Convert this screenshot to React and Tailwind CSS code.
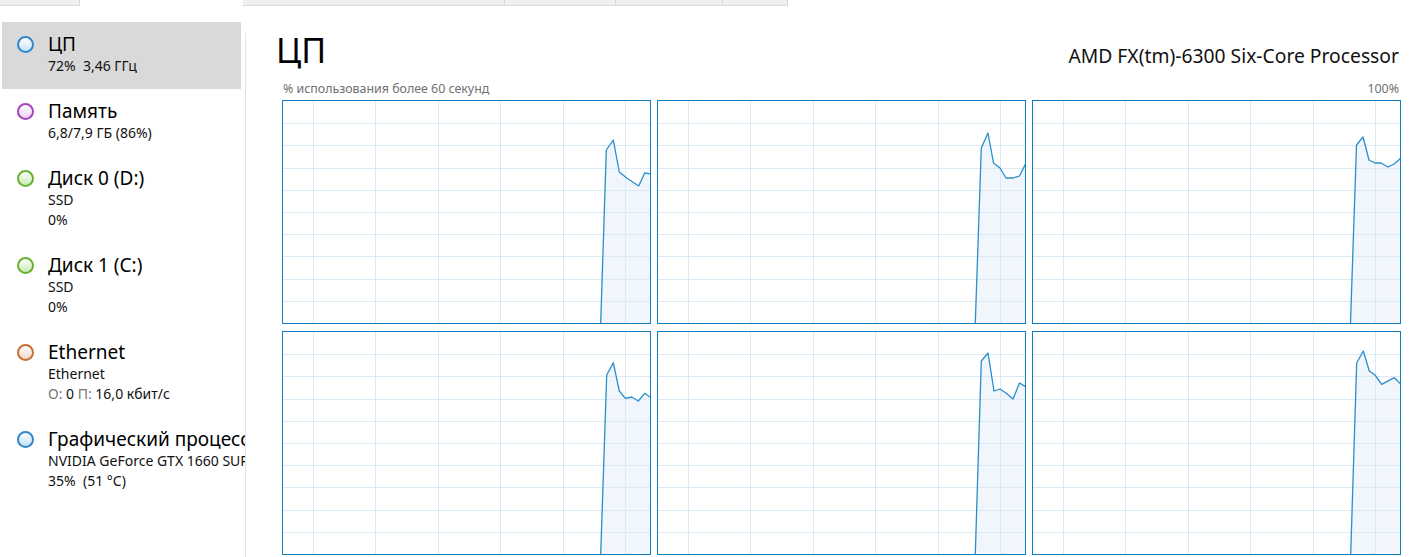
import React from 'react';

// Task Manager, performance tab: resource list on the left, six per-core CPU graphs on the right.
const FONT = { fontFamily: '"Noto Sans", "Segoe UI", Arial, sans-serif' };

const TABS = [
  { w: 80 },
  { w: 163, active: true },
  { w: 262 },
  { w: 111 },
  { w: 107 },
  { w: 65 },
];

const RING = {
  blue: 'border-[#2f87cc] from-white to-[#c6e1f5]',
  purple: 'border-[#a244c0] from-white to-[#ead2f4]',
  green: 'border-[#66b034] from-white to-[#cbe9b5]',
  orange: 'border-[#c66f33] from-white to-[#f3d8c5]',
};

const ITEMS = [
  { title: 'ЦП', lines: ['72%\u00a0\u00a03,46 ГГц'], ring: 'blue', active: true },
  { title: 'Память', lines: ['6,8/7,9 ГБ (86%)'], ring: 'purple' },
  { title: 'Диск 0 (D:)', lines: ['SSD', '0%'], ring: 'green' },
  { title: 'Диск 1 (C:)', lines: ['SSD', '0%'], ring: 'green' },
  { title: 'Ethernet', lines: ['Ethernet', 'net'], ring: 'orange' },
  { title: 'Графический процессор', lines: ['NVIDIA GeForce GTX 1660 SUPER', '35%\u00a0\u00a0(51 °C)'], ring: 'blue' },
];

// points measured relative to each graph's outer box (369 x 224)
const GRAPHS = [
  [[318.7, 224], [324.3, 50], [331.3, 40], [337.3, 72], [344.7, 78], [356.7, 86], [362.7, 73], [369, 74]],
  [[318.3, 224], [324.3, 48], [331, 33], [336.5, 63], [343, 68], [349, 78], [356, 78], [362.5, 76], [369, 63]],
  [[318.5, 224], [324.5, 45], [331, 37], [337, 60], [343, 63], [349, 63], [356, 67], [362, 64], [369, 58]],
  [[318.7, 224], [324.7, 44], [331.3, 31.7], [337.3, 60], [343.3, 67.3], [349.7, 66], [356.3, 70], [362.7, 62.3], [369, 66.7]],
  [[318.3, 224], [324.3, 30], [331, 22], [337, 60], [343, 58], [349, 62], [356, 68], [362.5, 52], [369, 56]],
  [[318.7, 224], [324.7, 32], [331.3, 20], [337.3, 40], [343, 44], [349.7, 53.3], [362.3, 46.7], [369, 53.3]],
];

const VLINES = [30, 92.4, 154.8, 217.2, 279.6, 342];
const HLINES = Array.from({ length: 9 }, (_, i) => (i + 1) * 22.2);

function Chart({ pts }) {
  const p = pts.map(([x, y]) => [x - 1, Math.min(y - 1, 222)]);
  const line = p.map(([x, y]) => `${x},${y}`).join(' ');
  const area = `${line} 367,222 ${p[0][0]},222`;
  return (
    <div className="h-[224px] border border-[#117dbb] bg-white">
      <svg className="block h-full w-full" viewBox="0 0 367 222" preserveAspectRatio="none">
        <polygon points={area} fill="#f0f6fb" />
        {VLINES.map((x) => (
          <line key={'v' + x} x1={Math.round(x) + 0.5} x2={Math.round(x) + 0.5} y1="0" y2="222" stroke="#d9eaf4" strokeWidth="1" shapeRendering="crispEdges" />
        ))}
        {HLINES.map((y) => (
          <line key={'h' + y} x1="0" x2="367" y1={Math.round(y) + 0.5} y2={Math.round(y) + 0.5} stroke="#d9eaf4" strokeWidth="1" shapeRendering="crispEdges" />
        ))}
        <polyline points={line} fill="none" stroke="#2a8ecb" strokeWidth="1.3" strokeLinejoin="round" />
      </svg>
    </div>
  );
}

function Item({ item }) {
  return (
    <div className={`flex w-[239px] whitespace-nowrap pl-[15px] pt-[10px] pb-[13px] ${item.active ? 'bg-[#d9d9d9]' : ''}`}>
      <div className="flex h-[24px] w-[17px] shrink-0 items-center">
        <span className={`block h-[17px] w-[17px] rounded-full border-2 bg-linear-to-b ${RING[item.ring]}`} />
      </div>
      <div className="ml-[14px]">
        <div className="text-[19px] leading-[24px] text-black">{item.title}</div>
        {item.lines.map((l, i) =>
          l === 'net' ? (
            <div key={i} className="text-[14px] leading-[20px] text-[#111]">
              <span className="text-[#777]">О:</span> 0 <span className="text-[#777]">П:</span> 16,0 кбит/с
            </div>
          ) : (
            <div key={i} className="text-[14px] leading-[20px] text-[#111]">{l}</div>
          )
        )}
      </div>
    </div>
  );
}

export default function App() {
  return (
    <div className="flex h-[557px] w-[1409px] flex-col overflow-hidden bg-white" style={FONT}>
      <div className="flex h-[6px] shrink-0">
        {TABS.map((t, i) => (
          <div
            key={i}
            style={{ width: t.w }}
            className={t.active ? 'bg-white' : 'border-r border-b border-[#d9d9d9] bg-[#f0f0f0]'}
          />
        ))}
      </div>

      <div className="flex min-h-0 flex-1">
        <div className="w-[245px] shrink-0 overflow-hidden pl-[2px] pt-[16px]">
          {ITEMS.map((it) => (
            <Item key={it.title} item={it} />
          ))}
        </div>
        <div className="mt-[27px] w-px shrink-0 bg-[#e3e3e3]" />

        <div className="flex-1 pl-[36px] pr-[8px] pt-[24px]">
          <div className="flex items-baseline justify-between">
            <div className="-ml-[6px] text-[34px] leading-[40px] text-black">ЦП</div>
            <div className="mr-[2px] text-[19.3px] leading-[24px] text-[#111]">AMD FX(tm)-6300 Six-Core Processor</div>
          </div>
          <div className="mt-[11px] flex justify-between text-[12.4px] leading-[16px] text-[#707070]">
            <span className="ml-[1px]">% использования более 60 секунд</span>
            <span className="mr-[2px]">100%</span>
          </div>
          <div className="mt-[3px] grid grid-cols-3 gap-x-[6px] gap-y-[7px]">
            {GRAPHS.map((g, i) => (
              <Chart key={i} pts={g} />
            ))}
          </div>
        </div>
      </div>
    </div>
  );
}
